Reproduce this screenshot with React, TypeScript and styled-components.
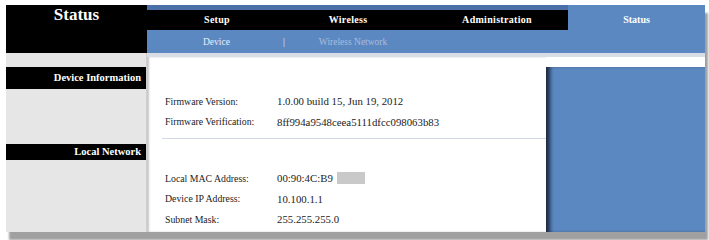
import styled, { createGlobalStyle } from 'styled-components';

const GlobalStyle = createGlobalStyle`
  html, body {
    margin: 0;
    padding: 0;
    background: #ffffff;
    min-height: 240px;
  }
  body {
    font-family: 'Liberation Serif', 'Times New Roman', serif;
    color: #222222;
  }
`;

const BLUE = '#5c88c2';

const Frame = styled.div`
  margin: 5px 0 0 6px;
  width: 699px;
  height: 227px;
  display: grid;
  grid-template-columns: 141px 1fr;
  grid-template-rows: 48px 1fr;
  background: #ffffff;
  box-shadow: 3px 8px 2px #a0a0a0;
`;

const Title = styled.div`
  background: #000;
  color: #fff;
  font-weight: bold;
  font-size: 17px;
  text-align: center;
  line-height: 18px;
  padding-top: 1px;
`;

const Header = styled.div`
  display: flex;
  flex-direction: column;
`;

const NavRow = styled.div`
  display: flex;
  height: 25px;
`;

const NavTabs = styled.div`
  flex: 1;
  display: flex;
  background: #000;
  border-top: 5px solid #4b70a8;
`;

const Tab = styled.div<{ $width: number; $offset?: number }>`
  width: ${(p) => p.$width}px;
  margin-left: ${(p) => p.$offset ?? 0}px;
  text-align: center;
  color: #fff;
  font-weight: bold;
  font-size: 10px;
  letter-spacing: 0.3px;
  line-height: 20px;
`;

const ActiveTab = styled.div`
  width: 137px;
  background: ${BLUE};
  color: #fff;
  font-weight: bold;
  font-size: 10px;
  text-align: center;
  padding-top: 5px;
  line-height: 20px;
`;

const SubNav = styled.div`
  flex: 1;
  background: ${BLUE};
  display: flex;
  align-items: center;
  font-size: 9.5px;
  padding-left: 56px;
`;

const SubItem = styled.span<{ $dim?: boolean }>`
  color: ${(p) => (p.$dim ? '#a9bddc' : '#e6eefa')};
`;

const Separator = styled.span`
  color: #e6eefa;
  margin: 0 34px 0 53px;
`;

const SideColumn = styled.div`
  background: #e6e6e6;
  display: flex;
  flex-direction: column;
  border-right: 1px solid #cfcfcf;
`;

const SideHeading = styled.div<{ $top: number; $height: number }>`
  margin-top: ${(p) => p.$top}px;
  height: ${(p) => p.$height}px;
  background: #000;
  color: #fff;
  font-weight: bold;
  font-size: 10.5px;
  text-align: right;
  padding-right: 5px;
  line-height: ${(p) => p.$height}px;
`;

const Body = styled.div`
  display: flex;
  flex-direction: column;
  border-top: 4px solid #d9dde5;
`;

const BodyRow = styled.div`
  flex: 1;
  display: flex;
`;

const Content = styled.div`
  width: 399px;
  padding: 34px 0 0 18px;
  box-sizing: border-box;
  box-shadow: inset 2px 0 2px #c8c8c8;
`;

const Group = styled.div`
  display: flex;
  flex-direction: column;
`;

const Row = styled.div`
  display: flex;
  height: 20.5px;
  align-items: center;
`;

const Label = styled.span`
  width: 112px;
  font-size: 9.8px;
`;

const Value = styled.span`
  display: flex;
  align-items: center;
  font-size: 10.8px;
`;

const Masked = styled.span`
  display: inline-block;
  width: 28px;
  height: 12px;
  margin-left: 4px;
  background: #c9c9c9;
`;

const Divider = styled.div`
  height: 1px;
  background: #d3d8e6;
  margin: 6px 0 29px -3px;
`;

const SidePanel = styled.div`
  flex: 1;
  margin-top: 10px;
  background: ${BLUE};
  box-shadow: inset 6px 0 4px -2px #1c2a40;
`;

const rowsTop = [
  ['Firmware Version:', '1.0.00 build 15, Jun 19, 2012'],
  ['Firmware Verification:', '8ff994a9548ceea5111dfcc098063b83'],
];

const rowsBottom = [
  ['Device IP Address:', '10.100.1.1'],
  ['Subnet Mask:', '255.255.255.0'],
];

export default function App() {
  return (
    <>
      <GlobalStyle />
      <Frame>
        <Title>Status</Title>
        <Header>
          <NavRow>
            <NavTabs>
              <Tab $width={140}>Setup</Tab>
              <Tab $width={122}>Wireless</Tab>
              <Tab $width={142} $offset={17}>Administration</Tab>
            </NavTabs>
            <ActiveTab>Status</ActiveTab>
          </NavRow>
          <SubNav>
            <SubItem>Device</SubItem>
            <Separator>|</Separator>
            <SubItem $dim>Wireless Network</SubItem>
          </SubNav>
        </Header>
        <SideColumn>
          <SideHeading $top={14} $height={22}>Device Information</SideHeading>
          <SideHeading $top={55} $height={16}>Local Network</SideHeading>
        </SideColumn>
        <Body>
          <BodyRow>
            <Content>
              <Group>
                {rowsTop.map(([label, value]) => (
                  <Row key={label}>
                    <Label>{label}</Label>
                    <Value>{value}</Value>
                  </Row>
                ))}
              </Group>
              <Divider />
              <Group>
                <Row>
                  <Label>Local MAC Address:</Label>
                  <Value>
                    00:90:4C:B9
                    <Masked />
                  </Value>
                </Row>
                {rowsBottom.map(([label, value]) => (
                  <Row key={label}>
                    <Label>{label}</Label>
                    <Value>{value}</Value>
                  </Row>
                ))}
              </Group>
            </Content>
            <SidePanel />
          </BodyRow>
        </Body>
      </Frame>
    </>
  );
}
